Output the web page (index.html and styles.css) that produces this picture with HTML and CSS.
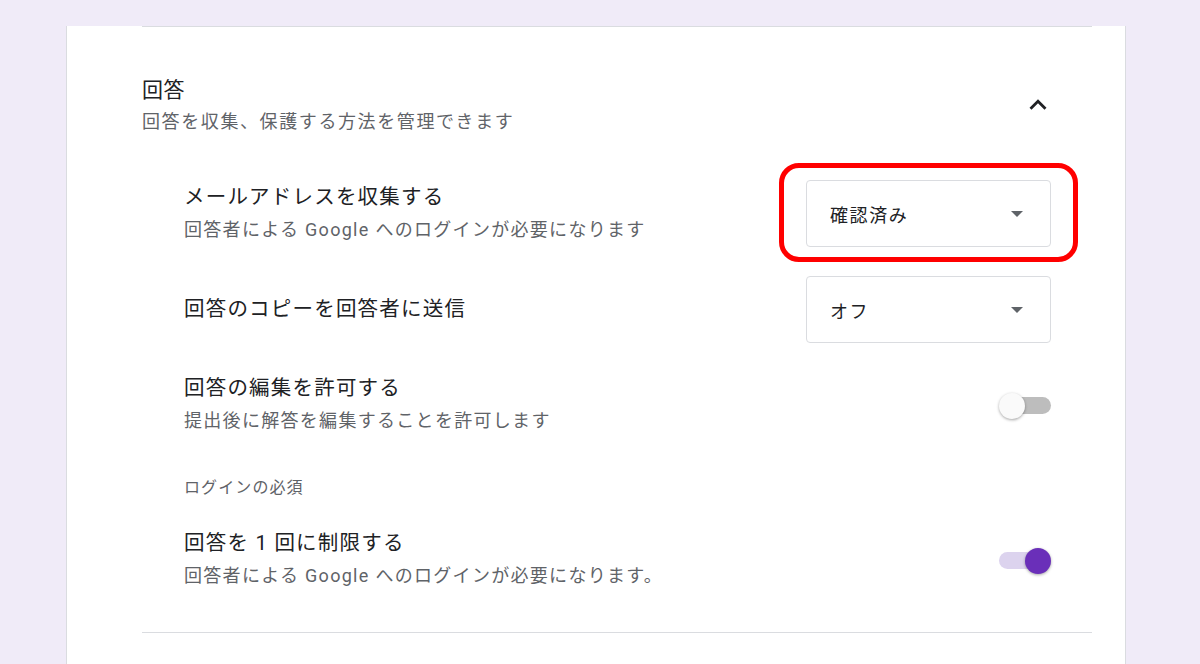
FILE: index.html
```html
<!DOCTYPE html>
<html lang="ja">
<head>
<meta charset="utf-8">
<link rel="stylesheet" href="styles.css">
</head>
<body>
<div class="page">
  <div class="card">
    <div class="divider top"></div>

    <div class="section-head">
      <div class="head-text">
        <div class="head-title">回答</div>
        <div class="head-sub">回答を収集、保護する方法を管理できます</div>
      </div>
      <svg class="chevron" viewBox="0 0 24 24" width="34" height="34"><path d="M12 8l-6 6 1.41 1.41L12 10.83l4.59 4.58L18 14z" fill="#202124"/></svg>
    </div>

    <div class="row r1">
      <div class="row-text">
        <div class="row-title">メールアドレスを収集する</div>
        <div class="row-sub">回答者による Google へのログインが必要になります</div>
      </div>
      <div class="select-wrap">
        <div class="select"><span class="select-val">確認済み</span><span class="caret"></span></div>
        <div class="highlight"></div>
      </div>
    </div>

    <div class="row r2">
      <div class="row-text">
        <div class="row-title">回答のコピーを回答者に送信</div>
      </div>
      <div class="select-wrap">
        <div class="select"><span class="select-val">オフ</span><span class="caret"></span></div>
      </div>
    </div>

    <div class="row r3">
      <div class="row-text">
        <div class="row-title">回答の編集を許可する</div>
        <div class="row-sub">提出後に解答を編集することを許可します</div>
      </div>
      <div class="toggle"><span class="track"></span><span class="knob"></span></div>
    </div>

    <div class="group-label">ログインの必須</div>

    <div class="row r4">
      <div class="row-text">
        <div class="row-title">回答を 1 回に制限する</div>
        <div class="row-sub">回答者による Google へのログインが必要になります。</div>
      </div>
      <div class="toggle on"><span class="track"></span><span class="knob"></span></div>
    </div>

    <div class="divider bottom"></div>
  </div>
</div>
</body>
</html>
```

FILE: styles.css
```css
html, body {
  margin: 0;
  padding: 0;
  background: #f0ebf8;
  font-family: Roboto, "Noto Sans CJK JP", sans-serif;
  color: #202124;
}
.page {
  height: 664px;
  overflow: hidden;
}
.card {
  margin-left: 66px;
  min-height: 664px;
  background: #fff;
  border-left: 1px solid #dadce0;
  border-right: 1px solid #dadce0;
  padding: 0 33px 0 75px;
  box-sizing: content-box;
  width: 950px;
}
.divider {
  height: 1px;
  background: #dadce0;
}
.divider.top { margin-top: 26px; }
.divider.bottom { margin-top: 40px; }

.section-head {
  display: flex;
  align-items: center;
  justify-content: space-between;
  margin-top: 47px;
}
.head-title {
  font-size: 21px;
  line-height: 32px;
  letter-spacing: 0.5px;
  color: #202124;
}
.head-sub {
  font-size: 18px;
  line-height: 32px;
  letter-spacing: 1.6px;
  color: #5f6368;
}
.chevron {
  margin-right: 37px;
  margin-top: -2px;
}

.row {
  display: flex;
  align-items: center;
  justify-content: space-between;
  padding: 0 41px 0 42px;
}
.r1 { margin-top: 42px; }
.r2 { margin-top: 29px; }
.r3 { margin-top: 29px; }
.r4 { margin-top: 27px; }

.row-title {
  font-size: 20.5px;
  line-height: 33px;
  letter-spacing: 1.2px;
  color: #202124;
}
.row-sub {
  font-size: 18px;
  line-height: 32px;
  letter-spacing: 1.3px;
  color: #5f6368;
}

.select-wrap {
  position: relative;
}
.select {
  height: 65px;
  border: 1px solid #dadce0;
  border-radius: 4px;
  display: flex;
  align-items: center;
  justify-content: space-between;
  padding: 0 27px 0 23px;
  box-sizing: content-box;
  width: 193px;
}
.select-val {
  font-size: 18px;
  letter-spacing: 1.6px;
  color: #202124;
}
.caret {
  width: 0;
  height: 0;
  border-left: 6px solid transparent;
  border-right: 6px solid transparent;
  border-top: 6px solid #5f6368;
}
.highlight {
  position: absolute;
  left: -27px;
  top: -17px;
  right: -27px;
  bottom: -15px;
  border: 5px solid #ff0000;
  border-radius: 20px;
  box-sizing: border-box;
}

.toggle {
  position: relative;
  width: 52px;
  height: 26px;
}
.toggle .track {
  position: absolute;
  left: 4px;
  right: 0;
  top: 4px;
  height: 17px;
  border-radius: 9px;
  background: #bdbdbd;
}
.toggle .knob {
  position: absolute;
  left: 0;
  top: 0;
  width: 26px;
  height: 26px;
  border-radius: 50%;
  background: #fafafa;
  box-shadow: 0 1px 3px rgba(0,0,0,0.35);
}
.toggle.on .track {
  left: 0;
  right: 6px;
  background: #dcd3ee;
}
.toggle.on .knob {
  left: auto;
  right: 0;
  background: #6a2fb9;
}
.r3 .toggle { margin-top: 2px; }
.r4 .toggle { margin-top: 2px; }

.group-label {
  margin-top: 39px;
  padding-left: 42px;
  font-size: 16px;
  line-height: 24px;
  letter-spacing: 1.1px;
  color: #5f6368;
}
```
